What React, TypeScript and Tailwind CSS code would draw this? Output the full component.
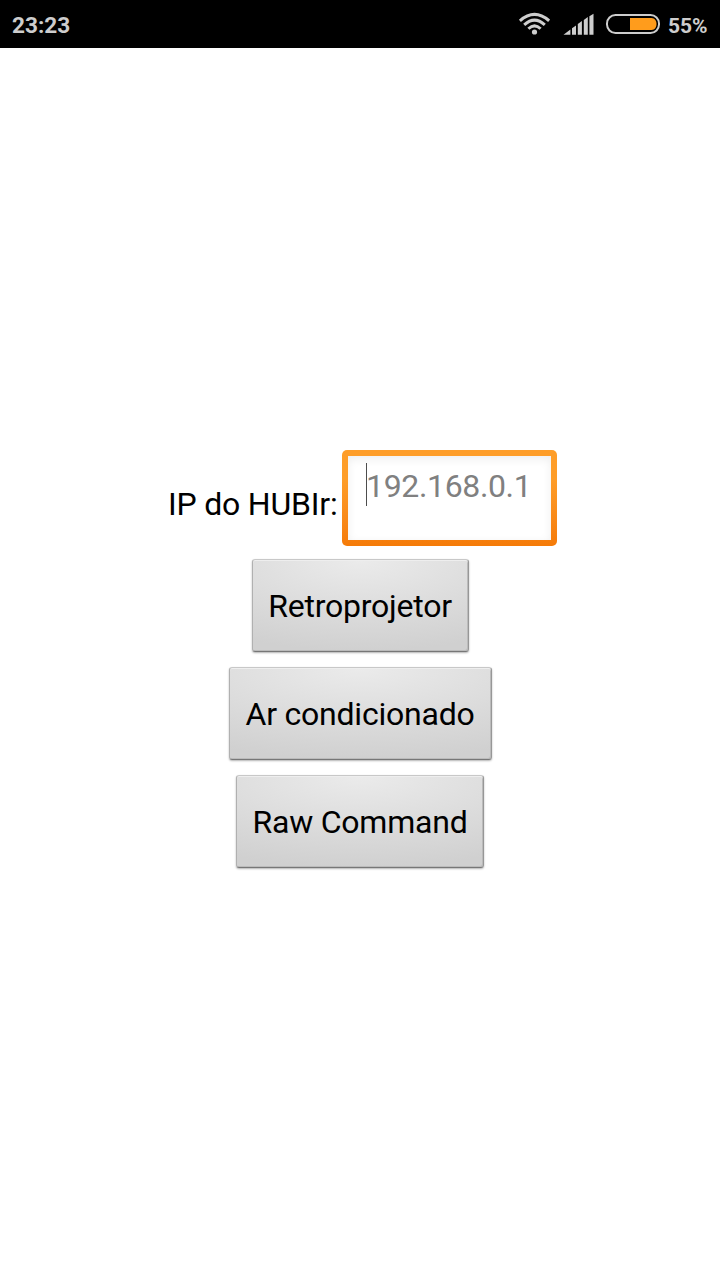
const buttons = [
  { label: "Retroprojetor", width: "w-[217px]" },
  { label: "Ar condicionado", width: "w-[263px]" },
  { label: "Raw Command", width: "w-[248px]" },
];

function WifiIcon() {
  return (
    <svg width="32" height="24" viewBox="518 12 32 24" fill="none" stroke="#cdcdcd" strokeWidth="3">
      <path d="M519.9 20.8Q534.5 8 549.1 20.8" />
      <path d="M524.2 24.8Q534.5 15.4 544.8 24.8" />
      <path d="M528.4 28.8Q534.5 22.8 540.6 28.8" />
      <circle cx="534.5" cy="32" r="2.6" fill="#cdcdcd" stroke="none" />
    </svg>
  );
}

function SignalIcon() {
  return (
    <svg width="32" height="24" viewBox="563 12 32 24" fill="#cdcdcd">
      <path d="M563.5 34.7 570.4 29.6V34.7ZM572 34.7V28.2L576 25.4V34.7ZM577.8 34.7V24L581.9 21.1V34.7ZM583.8 34.7V19.9L587.8 17.1V34.7ZM589.4 34.7V16.2L593.5 13.8V34.7Z" />
    </svg>
  );
}

function BatteryIcon() {
  return (
    <svg width="56" height="24" viewBox="605 12 56 24" fill="none">
      <rect x="607" y="15" width="52" height="18" rx="8.5" stroke="#cdcdcd" strokeWidth="2" />
      <path d="M630 18H651.5C654.8 18 656.5 21 656.5 24S654.8 30 651.5 30H630Z" fill="#ff9c1c" />
    </svg>
  );
}

export default function App() {
  return (
    <div className="flex h-[1280px] w-[720px] flex-col overflow-hidden bg-white font-['Roboto',sans-serif]">
      <header className="flex h-12 shrink-0 items-center bg-black pl-3 text-[22.6px] font-bold text-[#cdcdcd]">
        <time className="w-[506px] pt-[3px] leading-6">23:23</time>
        <div className="flex items-center">
          <WifiIcon />
          <span className="ml-[13px]"><SignalIcon /></span>
          <span className="ml-2.5"><BatteryIcon /></span>
          <span className="ml-[7px] pt-[3px] text-[21px] leading-6">55%</span>
        </div>
      </header>
      <main className="flex flex-1 flex-col items-center pt-[402px] text-[32px] leading-[38px] tracking-[-0.2px] text-black">
        <div className="flex h-[96px] w-full items-center pl-[168px]">
          <label className="w-[174px] whitespace-nowrap pt-3">IP do HUBIr:</label>
          <div className="h-[96px] w-[215px] rounded-[5px] bg-linear-to-b from-[#fe9d28] from-30% to-[#f57b08] px-[6px] pt-[6px] pb-[6px]">
            <div className="flex h-full items-start bg-white pt-[7px] pl-[18px] shadow-[inset_0_3px_10px_rgba(0,0,0,0.07)]">
              <span className="h-[43px] w-px bg-[#4d4d4d]" />
              <span className="-ml-px pt-[4px] tracking-[-0.35px] text-[#808080]">192.168.0.1</span>
            </div>
          </div>
        </div>
        <div className="mt-[13px] flex flex-col items-center gap-[15px]">
          {buttons.map(({ label, width }) => (
            <button
              key={label}
              className={`${width} h-[93px] whitespace-nowrap rounded-[3px] border border-t-[#c8c8c8] border-r-[#979797] border-b-[#777777] border-l-[#b0b0b0] bg-[radial-gradient(ellipse_110%_100%_at_50%_0%,#ebebeb,#d0d0d0)] tracking-[-0.22px] shadow-[0_1px_2px_rgba(0,0,0,0.3),inset_0_1px_0_#eeeeee,inset_-1px_-1px_0_#bbbbbb]`}
            >
              {label}
            </button>
          ))}
        </div>
      </main>
    </div>
  );
}
